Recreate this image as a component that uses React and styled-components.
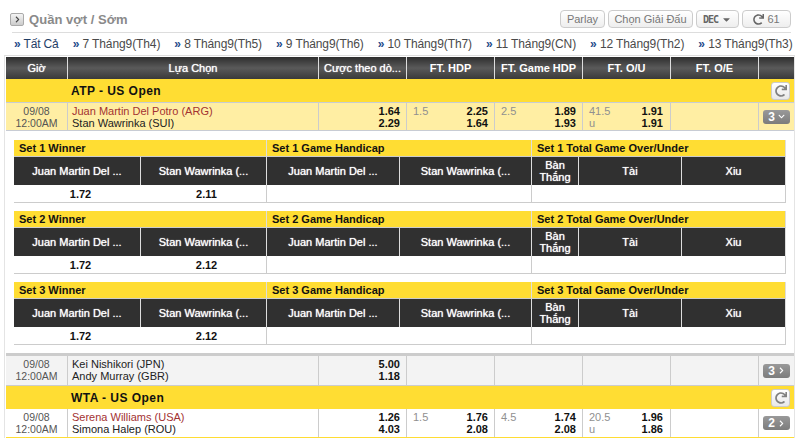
import React from "react";
import styled, { createGlobalStyle } from "styled-components";
import { FaRedo, FaChevronRight, FaChevronDown, FaCaretDown } from "react-icons/fa";

const dates = [
  "Tất Cả",
  "7 Tháng9(Th4)",
  "8 Tháng9(Th5)",
  "9 Tháng9(Th6)",
  "10 Tháng9(Th7)",
  "11 Tháng9(CN)",
  "12 Tháng9(Th2)",
  "13 Tháng9(Th3)",
];

const headers = [
  { label: "Giờ", light: true },
  { label: "Lựa Chọn", light: true },
  { label: "Cược theo dò...", light: true },
  { label: "FT. HDP" },
  { label: "FT. Game HDP" },
  { label: "FT. O/U" },
  { label: "FT. O/E" },
  { label: "" },
];

const sets = [
  { n: 1, a: "1.72", b: "2.11" },
  { n: 2, a: "1.72", b: "2.12" },
  { n: 3, a: "1.72", b: "2.12" },
];

const App = () => {
  return (
    <Page>
      <GlobalStyle />
      <TitleBar>
        <TitleLeft>
          <TitleIcon>
            <FaChevronRight />
          </TitleIcon>
          <Title>Quần vợt / Sớm</Title>
        </TitleLeft>
        <Tools>
          <ToolButton w="45px">Parlay</ToolButton>
          <ToolButton w="85px">Chọn Giải Đấu</ToolButton>
          <ToolButton w="43px">
            <DecLabel>DEC</DecLabel>
            <FaCaretDown />
          </ToolButton>
          <ToolButton w="49px">
            <FaRedo />
            61
          </ToolButton>
        </Tools>
      </TitleBar>

      <DateBar>
        {dates.map((d, i) => (
          <DateItem key={d} active={i === 0}>
            <span>»</span> {d}
          </DateItem>
        ))}
      </DateBar>

      <Board>
        <HeadRow>
          {headers.map((h, i) => (
            <HeadCell key={i} light={h.light}>
              {h.label}
            </HeadCell>
          ))}
        </HeadRow>

        <League name="ATP - US Open" />
        <Match
          bg="#ffeea3"
          border="#c8ccd4"
          topLine
          home="Juan Martin Del Potro (ARG)"
          away="Stan Wawrinka (SUI)"
          favourite
          odds={["1.64", "2.29"]}
          hdp={["1.5", "2.25", "1.64"]}
          game={["2.5", "1.89", "1.93"]}
          ou={["41.5", "1.91", "1.91"]}
          count={3}
          open
        />

        <Panel>
          {sets.map((s) => (
            <SetBlock key={s.n} set={s} />
          ))}
        </Panel>

        <Match
          bg="#f3f3f3"
          border="#ccc"
          topBar
          home="Kei Nishikori (JPN)"
          away="Andy Murray (GBR)"
          odds={["5.00", "1.18"]}
          count={3}
        />
        <League name="WTA - US Open" />
        <Match
          bg="#fff"
          border="#ffdd33"
          home="Serena Williams (USA)"
          away="Simona Halep (ROU)"
          favourite
          odds={["1.26", "4.03"]}
          hdp={["1.5", "1.76", "2.08"]}
          game={["4.5", "1.74", "2.08"]}
          ou={["20.5", "1.96", "1.86"]}
          count={2}
        />
      </Board>
    </Page>
  );
};

const League = ({ name }) => (
  <LeagueRow>
    <LeagueName>{name}</LeagueName>
    <RefreshBox>
      <FaRedo />
    </RefreshBox>
  </LeagueRow>
);

const Market = ({ data, wide }) => (
  <OddsCell wide={wide}>
    {data && (
      <>
        <Hdp>
          <div>{data[0]}</div>
          {wide && <div>u</div>}
        </Hdp>
        <Prices>
          <div>{data[1]}</div>
          <div>{data[2]}</div>
        </Prices>
      </>
    )}
  </OddsCell>
);

const Match = ({ bg, border, topBar, topLine, home, away, favourite, odds, hdp, game, ou, count, open }) => (
  <MatchRow bg={bg} border={border} topBar={topBar} topLine={topLine}>
    <TimeCell>
      <div>09/08</div>
      <div>12:00AM</div>
    </TimeCell>
    <NameCell>
      <Home favourite={favourite}>{home}</Home>
      <div>{away}</div>
    </NameCell>
    <OddsCell>
      <Prices>
        <div>{odds[0]}</div>
        <div>{odds[1]}</div>
      </Prices>
    </OddsCell>
    <Market data={hdp} />
    <Market data={game} />
    <Market data={ou} wide />
    <OddsCell />
    <ToggleCell>
      <Badge>
        {count}
        {open ? <FaChevronDown /> : <FaChevronRight />}
      </Badge>
    </ToggleCell>
  </MatchRow>
);

const SetBlock = ({ set }) => (
  <SetGrid>
    <SetTitle span={2}>Set {set.n} Winner</SetTitle>
    <SetTitle span={2}>Set {set.n} Game Handicap</SetTitle>
    <SetTitle span={3}>Set {set.n} Total Game Over/Under</SetTitle>

    <SetHead>Juan Martin Del ...</SetHead>
    <SetHead>Stan Wawrinka (...</SetHead>
    <SetHead>Juan Martin Del ...</SetHead>
    <SetHead>Stan Wawrinka (...</SetHead>
    <SetHead>
      Bàn
      <br />
      Thắng
    </SetHead>
    <SetHead>Tài</SetHead>
    <SetHead>Xiu</SetHead>

    <SetOdd>{set.a}</SetOdd>
    <SetOdd edge>{set.b}</SetOdd>
    <SetOdd span={2} edge />
    <SetOdd span={3} edge />
  </SetGrid>
);

export default App;

const columns = "62px 251px 88px 88px 88px 88px 88px 35px";

const GlobalStyle = createGlobalStyle`
  html, body {
    margin: 0;
    padding: 0;
    background: #fff;
    overflow: hidden;
  }
  body {
    font-family: "Liberation Sans", Arial, sans-serif;
    font-size: 11px;
    color: #222;
  }
`;

const Page = styled.div`
  width: 799px;
  height: 438px;
  overflow: hidden;
`;

const TitleBar = styled.div`
  display: flex;
  justify-content: space-between;
  align-items: center;
  height: 33px;
  margin: 0 8px 0 12px;
  padding-top: 6px;
  box-sizing: border-box;
  border-bottom: 1px solid #ddd;
`;

const TitleLeft = styled.div`
  display: flex;
  align-items: center;
  gap: 5px;
  margin-left: -2px;
`;

const TitleIcon = styled.div`
  width: 14px;
  height: 13px;
  display: flex;
  align-items: center;
  justify-content: center;
  border: 1px solid #aaa;
  box-sizing: border-box;
  border-radius: 2px;
  background: linear-gradient(#f4f4f4, #ccc);
  color: #444;
  font-size: 7px;
`;

const Title = styled.div`
  font-size: 13px;
  font-weight: bold;
  letter-spacing: 0.05px;
  color: #8a8a8a;
`;

const Tools = styled.div`
  display: flex;
  gap: 3px;
`;

const ToolButton = styled.div`
  width: ${(props) => props.w};
  height: 18px;
  display: flex;
  align-items: center;
  justify-content: center;
  gap: 3px;
  box-sizing: border-box;
  border: 1px solid #ccc;
  border-radius: 4px;
  background: linear-gradient(#fff, #eee);
  color: #777;
  font-size: 11px;

  svg {
    font-size: 11px;
    color: #666;
  }
`;

const DecLabel = styled.span`
  font-family: "DejaVu Sans Mono", monospace;
  font-size: 10px;
  font-weight: bold;
  letter-spacing: -1px;
  color: #666;
`;

const DateBar = styled.div`
  display: flex;
  gap: 14px;
  height: 22px;
  align-items: center;
  margin-left: 14px;
  white-space: nowrap;
`;

const DateItem = styled.div`
  font-size: 12px;
  letter-spacing: ${(props) => (props.active ? "-0.15px" : "-0.1px")};
  color: ${(props) => (props.active ? "#1f3d66" : "#4a4a4a")};

  span {
    color: #1f4a8a;
    font-weight: bold;
  }
`;

const Board = styled.div`
  width: 791px;
  height: 383px;
  margin-left: 4px;
  box-sizing: border-box;
  border-top: 1px solid #ddd;
  border-left: 1px solid #e4e4e4;
  border-right: 1px solid #e4e4e4;
  padding: 1px 0 0 1px;
`;

const HeadRow = styled.div`
  display: grid;
  grid-template-columns: ${columns};
  height: 22px;
`;

const HeadCell = styled.div`
  display: flex;
  align-items: center;
  justify-content: center;
  border-right: 1px solid #ddd;
  background: linear-gradient(#2e2e2e, #5a5a5a 50%, #3a3a3a);
  color: #fff;
  font-size: 11px;
  font-weight: ${(props) => (props.light ? "normal" : "bold")};
  text-shadow: ${(props) => (props.light ? "0 0 1px #fff" : "none")};
  white-space: nowrap;

  &:last-child {
    border-right: none;
  }
`;

const LeagueRow = styled.div`
  height: 23px;
  display: flex;
  align-items: center;
  justify-content: space-between;
  padding: 0 4px 0 65px;
  background: #ffdd33;
`;

const LeagueName = styled.div`
  font-size: 12px;
  font-weight: bold;
  letter-spacing: 0.45px;
  color: #111;
`;

const RefreshBox = styled.div`
  width: 19px;
  height: 18px;
  display: flex;
  align-items: center;
  justify-content: center;
  box-sizing: border-box;
  border: 1px solid #ccc;
  border-radius: 3px;
  background: linear-gradient(#fff, #e8e8e8);
  color: #808080;
  font-size: 12px;
`;

const MatchRow = styled.div`
  display: grid;
  grid-template-columns: ${columns};
  height: 29px;
  box-sizing: ${(props) => (props.topBar ? "content-box" : "border-box")};
  background: ${(props) => props.bg};
  border-bottom: 1px solid ${(props) => props.border};
  border-top: ${(props) =>
    props.topBar ? "3px solid #ccc" : props.topLine ? `1px solid ${props.border}` : "none"};

  & > div {
    border-right: 1px solid #ccc;
  }
  & > div:last-child {
    border-right: none;
  }
`;

const TimeCell = styled.div`
  text-align: center;
  color: #555;
  font-size: 10.5px;
  line-height: 12px;
  padding-top: 2px;
`;

const NameCell = styled.div`
  padding: 2px 0 0 4px;
  font-size: 11px;
  line-height: 12px;
  color: #222;
  white-space: nowrap;
`;

const Home = styled.div`
  color: ${(props) => (props.favourite ? "#a33232" : "#222")};
`;

const OddsCell = styled.div`
  display: flex;
  justify-content: space-between;
  padding: 2px ${(props) => (props.wide ? "7px" : "6px")} 0 6px;
  line-height: 12px;
`;

const Hdp = styled.div`
  color: #909090;
  font-size: 11px;
`;

const Prices = styled.div`
  margin-left: auto;
  text-align: right;
  font-size: 11px;
  font-weight: bold;
  color: #111;
`;

const ToggleCell = styled.div`
  display: flex;
  align-items: center;
  justify-content: flex-end;
  padding-right: 4px;
`;

const Badge = styled.div`
  width: 27px;
  height: 14px;
  display: flex;
  align-items: center;
  justify-content: center;
  gap: 3px;
  border-radius: 3px;
  background: linear-gradient(#999, #7c7c7c);
  color: #fff;
  font-size: 12px;
  font-weight: bold;

  svg {
    font-size: 7px;
  }
`;

const Panel = styled.div`
  padding: 9px 8px 0 8px;
  height: 222px;
  box-sizing: border-box;
`;

const SetGrid = styled.div`
  display: grid;
  grid-template-columns: 127px 126px 133px 132px 47px 103px 104px;
  grid-template-rows: 17px 28px 18px;
  margin-bottom: 8px;
  width: 772px;
`;

const SetTitle = styled.div`
  grid-column: span ${(props) => props.span};
  display: flex;
  align-items: center;
  padding-left: 5px;
  background: #ffdd33;
  color: #111;
  font-size: 11px;
  font-weight: bold;
  border-right: 1px solid #ddd;
  border-bottom: 1px solid #ccc;
`;

const SetHead = styled.div`
  display: flex;
  align-items: center;
  justify-content: center;
  text-align: center;
  line-height: 12px;
  background: #303030;
  color: #fff;
  font-size: 11px;
  text-shadow: 0 0 1px #fff;
  border-right: 1px solid #ddd;
  white-space: nowrap;
`;

const SetOdd = styled.div`
  grid-column: span ${(props) => props.span || 1};
  display: flex;
  align-items: center;
  justify-content: center;
  padding-left: 6px;
  font-size: 11px;
  font-weight: bold;
  color: #111;
  border-bottom: 1px solid #ccc;
  border-right: ${(props) => (props.edge ? "1px solid #ccc" : "none")};
`;
